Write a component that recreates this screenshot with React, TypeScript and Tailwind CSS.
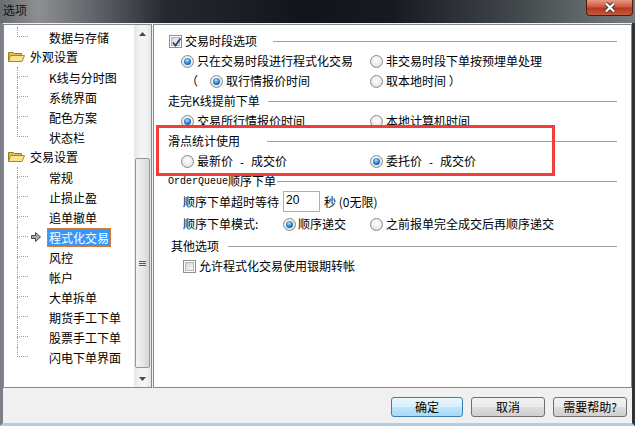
import React from "react";

type Node = { t: string; folder?: boolean; last?: boolean; sel?: boolean };

const tree: Node[] = [
  { t: "数据与存储", last: true },
  { t: "外观设置", folder: true },
  { t: "K线与分时图" },
  { t: "系统界面" },
  { t: "配色方案" },
  { t: "状态栏", last: true },
  { t: "交易设置", folder: true },
  { t: "常规" },
  { t: "止损止盈" },
  { t: "追单撤单" },
  { t: "程式化交易", sel: true },
  { t: "风控" },
  { t: "帐户" },
  { t: "大单拆单" },
  { t: "期货手工下单" },
  { t: "股票手工下单" },
  { t: "闪电下单界面", last: true },
];

function Radio({ on }: { on?: boolean }) {
  return (
    <span className="flex h-[13px] w-[13px] shrink-0 items-center justify-center rounded-full border border-[#8a8a8a] bg-[radial-gradient(circle_at_50%_40%,#ffffff,#ececec_55%,#cdcdcd)]">
      {on && (
        <span className="h-[7px] w-[7px] rounded-full bg-[radial-gradient(circle_at_45%_35%,#b6e6ff,#2f86d6_45%,#0b3e80)]" />
      )}
    </span>
  );
}

function Check({ on }: { on?: boolean }) {
  return (
    <span className="relative flex h-[13px] w-[13px] shrink-0 items-center justify-center border border-[#8e8f8f] bg-white">
      <span className="h-[9px] w-[9px] border border-[#b4b7bb] bg-[linear-gradient(135deg,#d4d6d8,#f7f7f7)]" />
      {on && (
        <svg className="absolute left-[1px] top-[1px]" width="11" height="11" viewBox="0 0 11 11">
          <path d="M2 5.5 L4.5 8.5 L9.5 1.5" fill="none" stroke="#2a3f7a" strokeWidth="1.8" />
        </svg>
      )}
    </span>
  );
}

function Header({ children, x, lineX }: { children: React.ReactNode; x: number; lineX: number }) {
  return (
    <div className="flex h-[20px] items-center pr-[14px]">
      <div className="shrink-0" style={{ width: x - 154 }} />
      <div className="flex shrink-0 items-center" style={{ width: lineX - x }}>
        {children}
      </div>
      <div className="h-px flex-1 bg-[#a0a0a0]" />
    </div>
  );
}

function Folder() {
  return (
    <svg width="17" height="12" viewBox="0 0 17 12">
      <path d="M0.5 1.5 H5.5 L6.5 2.5 H13.5 V10.5 H0.5 Z" fill="#e3bd4c" stroke="#9a7a22" />
      <path d="M2.5 4.5 H16.5 L14 10.5 H0.5 Z" fill="#f8e38c" stroke="#a8862a" />
    </svg>
  );
}

function Arrow() {
  return (
    <svg width="10" height="10" viewBox="0 0 10 10">
      <path d="M0.5 3.5 H4.5 V0.5 L9.5 5 L4.5 9.5 V6.5 H0.5 Z" fill="#a8a8a8" stroke="#4a4a4a" />
    </svg>
  );
}

function Btn({ children, main }: { children: React.ReactNode; main?: boolean }) {
  return (
    <div
      className={
        main
          ? "flex h-[20px] w-[72px] items-center justify-center rounded-[3px] border border-[#3c7fb1] bg-[linear-gradient(#eaf6fd,#d9f0fc_50%,#bee6fd_51%,#a7d9f5)] text-[12px] leading-none text-black"
          : "flex h-[20px] w-[74px] items-center justify-center rounded-[3px] border border-[#707070] bg-[linear-gradient(#f2f2f2,#ebebeb_50%,#dddddd_51%,#cfcfcf)] text-[12px] leading-none text-black"
      }
    >
      {children}
    </div>
  );
}

export default function App() {
  return (
    <div className="h-[426px] w-[635px] overflow-hidden bg-[#f0f0f0] font-['Noto_Sans_CJK_SC','Noto_Sans',sans-serif] text-[12px] text-black">
      {/* Title bar */}
      <div className="flex h-[23px] bg-[linear-gradient(90deg,#6a6d70_0%,#8e8f91_6%,#6a6d71_13%,#262a2f_26%,#111419_48%,#171b20_62%,#3f4448_80%,#62676a_92%,#777a7d_100%)]">
        <span className="pl-[3px] pt-[1px] text-[12px] leading-[18px] text-[#111]">选项</span>
        <div className="ml-auto mr-[2px] flex h-[16px] w-[47px] items-center justify-center rounded-b-[4px] border border-t-0 border-[#4e1c12] bg-[linear-gradient(#e89a86,#d0583e_45%,#b33a20_55%,#c45a3c)]">
          <svg width="14" height="11" viewBox="0 0 14 11">
            <path d="M3 1.5 L11 9.5 M11 1.5 L3 9.5" stroke="#3a3a3a" strokeWidth="4" />
            <path d="M3 1.5 L11 9.5 M11 1.5 L3 9.5" stroke="#ffffff" strokeWidth="2.2" />
          </svg>
        </div>
      </div>

      {/* Body */}
      <div className="h-[403px] border-b-[3px] border-l-[3px] border-r-[3px] border-b-[#b4cde6] border-l-[#7c8086] border-r-[#2f3338] pt-[1px]">
        <div className="flex h-[364px] gap-[1px]">
          {/* Tree */}
          <div className="flex w-[149px] shrink-0 border border-[#828790] bg-white">
            <div className="flex-1 pt-[2px]">
              {tree.map((n) =>
                n.folder ? (
                  <div key={n.t} className="flex h-[20px] items-center pl-[4px]">
                    <Folder />
                    <span className="ml-[5px]">{n.t}</span>
                  </div>
                ) : (
                  <div key={n.t} className="flex h-[20px] items-stretch">
                    <div className="w-[13px] shrink-0" />
                    <div className="flex w-[11px] shrink-0 flex-col">
                      <div className="h-[10px] border-b border-l border-dotted border-[#9a9a9a]" />
                      <div className={n.last ? "flex-1" : "flex-1 border-l border-dotted border-[#9a9a9a]"} />
                    </div>
                    <div className="flex w-[19px] shrink-0 items-center justify-center pr-[3px]">
                      {n.sel && <Arrow />}
                    </div>
                    <div className="flex items-center">
                      <span
                        className={
                          n.sel
                            ? "border border-dotted border-[#e0803a] bg-[#3399ff] px-[1px] leading-[17px] text-white"
                            : "border border-transparent px-[1px] leading-[17px]"
                        }
                      >
                        {n.t}
                      </span>
                    </div>
                  </div>
                )
              )}
            </div>
            {/* Scrollbar */}
            <div className="flex w-[17px] shrink-0 flex-col bg-[linear-gradient(90deg,#e6e6e6,#f4f4f4_40%,#f4f4f4_70%,#e6e6e6)]">
              <div className="flex h-[17px] items-center justify-center">
                <svg width="7" height="4" viewBox="0 0 7 4">
                  <path d="M0 4 L3.5 0 L7 4 Z" fill="#4a4a4a" />
                </svg>
              </div>
              <div className="flex-1 pl-[1px] pt-[116px]">
                <div className="flex h-[210px] w-[15px] flex-col items-center justify-center gap-[1px] rounded-[2px] border border-[#979797] bg-[linear-gradient(90deg,#f3f3f3,#e7e7e7_50%,#d6d6d6)]">
                  <span className="h-px w-[7px] bg-[#5a5a5a]" />
                  <span className="h-px w-[7px] bg-[#5a5a5a]" />
                  <span className="h-px w-[7px] bg-[#5a5a5a]" />
                </div>
              </div>
              <div className="flex h-[17px] items-center justify-center">
                <svg width="7" height="4" viewBox="0 0 7 4">
                  <path d="M0 0 L3.5 4 L7 0 Z" fill="#4a4a4a" />
                </svg>
              </div>
            </div>
          </div>

          {/* Settings panel */}
          <div className="relative w-[479px] shrink-0 border border-[#828790] bg-white pt-[6px]">
            <Header x={169} lineX={273}>
              <Check on />
              <span className="ml-[3px]">交易时段选项</span>
            </Header>
            <div className="flex h-[20px] items-center pl-[27px]">
              <div className="flex w-[189px] items-center">
                <Radio on />
                <span className="ml-[3px]">只在交易时段进行程式化交易</span>
              </div>
              <Radio />
              <span className="ml-[3px]">非交易时段下单按预埋单处理</span>
            </div>
            <div className="flex h-[20px] items-center pl-[32px]">
              <div className="flex w-[184px] items-center">
                <span className="w-[24px]">（</span>
                <Radio on />
                <span className="ml-[3px]">取行情报价时间</span>
              </div>
              <Radio />
              <span className="ml-[3px]">取本地时间 ）</span>
            </div>
            <Header x={168} lineX={268}>
              <span>走完K线提前下单</span>
            </Header>
            <div className="flex h-[20px] items-center pl-[27px]">
              <div className="flex w-[189px] items-center">
                <Radio on />
                <span className="ml-[3px]">交易所行情报价时间</span>
              </div>
              <Radio />
              <span className="ml-[3px]">本地计算机时间</span>
            </div>
            <Header x={168} lineX={267}>
              <span>滑点统计使用</span>
            </Header>
            <div className="flex h-[20px] items-center pl-[27px]">
              <div className="flex w-[189px] items-center">
                <Radio />
                <span className="ml-[3px]">
                  最新价<span className="font-['Liberation_Mono',monospace] text-[10px]"> - </span>成交价
                </span>
              </div>
              <Radio on />
              <span className="ml-[3px]">
                委托价<span className="font-['Liberation_Mono',monospace] text-[10px]"> - </span>成交价
              </span>
            </div>
            <Header x={168} lineX={277}>
              <span className="font-['Liberation_Mono',monospace] text-[10px]">OrderQueue</span>
              <span>顺序下单</span>
            </Header>
            <div className="flex h-[21px] items-center pl-[29px]">
              <span className="w-[100px]">顺序下单超时等待</span>
              <div className="h-[21px] w-[37px] border border-[#abadb3] bg-white pl-[2px] pt-[1px] font-['Liberation_Sans',sans-serif] text-[12px] leading-[14px]">
                20
              </div>
              <span className="ml-[4px]">秒 (0无限)</span>
            </div>
            <div className="flex h-[24px] items-center pl-[29px]">
              <div className="flex w-[187px] items-center">
                <span className="w-[100px]">顺序下单模式:</span>
                <Radio on />
                <span className="ml-[2px]">顺序递交</span>
              </div>
              <Radio />
              <span className="ml-[3px]">之前报单完全成交后再顺序递交</span>
            </div>
            <Header x={171} lineX={228}>
              <span>其他选项</span>
            </Header>
            <div className="flex h-[20px] items-center pl-[29px]">
              <Check />
              <span className="ml-[3px]">允许程式化交易使用银期转帐</span>
            </div>

            {/* Highlight box */}
            <div className="absolute left-[2px] top-[100px] h-[51px] w-[399px] border-[3px] border-[#f23c3c]" />
          </div>
        </div>

        {/* Footer buttons */}
        <div className="flex h-[35px] items-start justify-end gap-[8px] pr-[5px] pt-[9px]">
          <Btn main>确定</Btn>
          <Btn>取消</Btn>
          <Btn>需要帮助?</Btn>
        </div>
      </div>
    </div>
  );
}
